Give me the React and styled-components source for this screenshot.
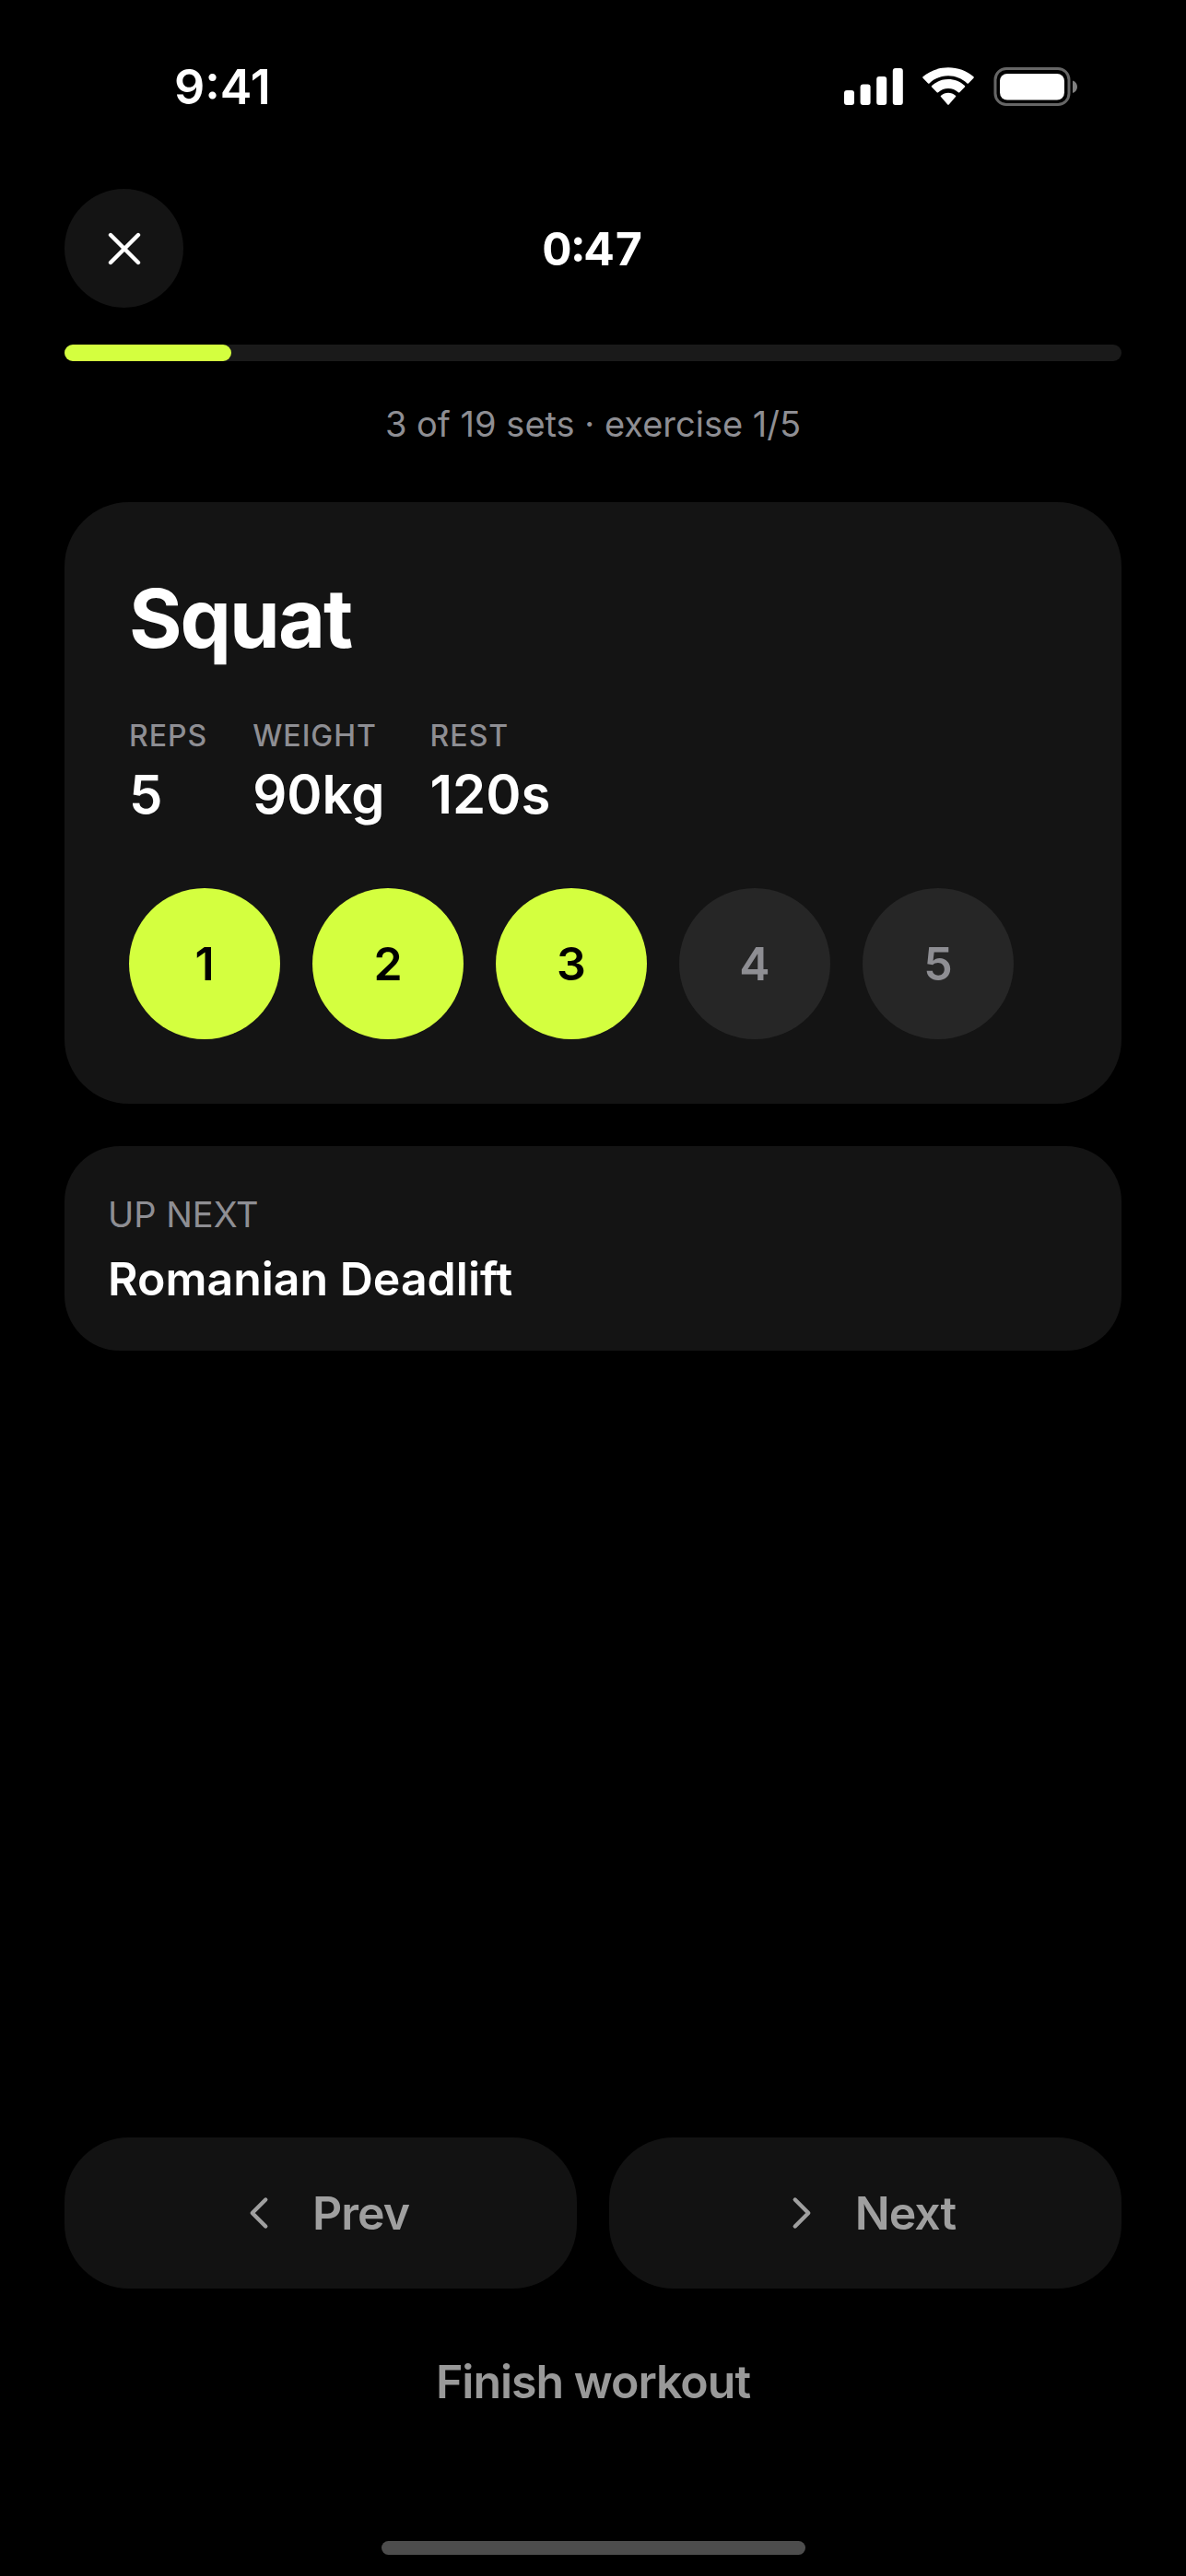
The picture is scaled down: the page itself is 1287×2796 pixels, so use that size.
import React from "react";
import { createGlobalStyle, styled } from "styled-components";

const workout = {
  elapsed: "0:47",
  doneSets: 3,
  totalSets: 19,
  exerciseIndex: 1,
  exerciseCount: 5,
  name: "Squat",
  next: "Romanian Deadlift",
  stats: [
    { label: "REPS", value: "5" },
    { label: "WEIGHT", value: "90kg" },
    { label: "REST", value: "120s" },
  ],
  sets: [1, 2, 3, 4, 5],
};

const SignalIcon = () => (
  <svg width="64" height="42" viewBox="0 0 64 42" fill="#fff" aria-hidden="true">
    <rect x="0" y="25" width="11" height="16" rx="3" />
    <rect x="17.6" y="18.5" width="11" height="22.5" rx="3" />
    <rect x="35.2" y="10" width="11" height="31" rx="3" />
    <rect x="52.8" y="1" width="11" height="40" rx="3" />
  </svg>
);

const WifiIcon = () => (
  <svg width="56" height="42" viewBox="0 0 56 42" fill="#fff" aria-hidden="true">
    <path d="M28 9.2c7.7 0 14.9 3 20.5 8.2.4.4 1 .4 1.4 0l5.6-5.7c.4-.4.4-1 0-1.4C48 3.9 38.4.3 28 .3S8 3.9.5 10.3c-.4.4-.4 1 0 1.4l5.6 5.7c.4.4 1 .4 1.4 0C13.1 12.2 20.3 9.2 28 9.2z" />
    <path d="M28 23.1c4.1 0 7.9 1.5 10.9 4.2.4.4 1 .4 1.4 0l5.6-5.7c.4-.4.4-1.1 0-1.5-4.8-4.5-11.1-7-17.9-7s-13.1 2.5-17.9 7c-.4.4-.4 1.1 0 1.5l5.6 5.7c.4.4 1 .4 1.4 0 3-2.7 6.800-4.2 10.900-4.2z" />
    <path d="M36 32.1c.4-.4.4-1-.1-1.4-2.2-1.9-5-2.9-7.9-2.9s-5.7 1-7.9 2.9c-.5.4-.5 1-.1 1.4l7.3 8.4c.4.4 1 .4 1.4 0z" />
  </svg>
);

const BatteryIcon = () => (
  <svg width="92" height="42" viewBox="0 0 92 42" fill="none" aria-hidden="true">
    <rect x="2" y="1.5" width="80" height="39" rx="12" stroke="#666" strokeWidth="3" />
    <rect x="7" y="7" width="70" height="28.5" rx="8" fill="#fff" />
    <path d="M86 14.5c3 .8 5 3.6 5 6.7s-2 5.9-5 6.7z" fill="#808080" />
  </svg>
);

const CloseIcon = () => (
  <svg width="36" height="36" viewBox="0 0 36 36" aria-hidden="true">
    <path d="M3 3l30 30M33 3L3 33" stroke="#fff" strokeWidth="4.4" strokeLinecap="round" />
  </svg>
);

const Chevron = ({ d }) => (
  <svg width="58" height="58" viewBox="0 0 24 24" fill="none" aria-hidden="true">
    <path d={d} stroke="currentColor" strokeWidth="1.8" strokeLinecap="round" strokeLinejoin="round" />
  </svg>
);

const App = () => {
  const progress = (workout.doneSets / workout.totalSets) * 100;

  return (
    <>
      <GlobalStyle />
      <Screen>
        <StatusBar>
          <Clock>9:41</Clock>
          <StatusIcons>
            <SignalIcon />
            <WifiIcon />
            <BatteryIcon />
          </StatusIcons>
        </StatusBar>
        <Content>
          <Header>
            <CloseButton aria-label="Close workout">
              <CloseIcon />
            </CloseButton>
            <Timer>{workout.elapsed}</Timer>
          </Header>
          <Track
            role="progressbar"
            aria-label="Sets done"
            aria-valuenow={workout.doneSets}
            aria-valuemax={workout.totalSets}
          >
            <Fill style={{ width: `${progress}%` }} />
          </Track>
          <Summary>
            {`${workout.doneSets} of ${workout.totalSets} sets · exercise ${workout.exerciseIndex}/${workout.exerciseCount}`}
          </Summary>
          <ExerciseCard>
            <ExerciseName>{workout.name}</ExerciseName>
            <Stats>
              {workout.stats.map((stat) => (
                <Stat key={stat.label}>
                  <StatLabel>{stat.label}</StatLabel>
                  <StatValue>{stat.value}</StatValue>
                </Stat>
              ))}
            </Stats>
            <Sets>
              {workout.sets.map((set) => (
                <SetButton key={set} $done={set <= workout.doneSets}>
                  {set}
                </SetButton>
              ))}
            </Sets>
          </ExerciseCard>
          <NextCard>
            <NextLabel>UP NEXT</NextLabel>
            <NextName>{workout.next}</NextName>
          </NextCard>
          <Footer>
            <NavRow>
              <NavButton>
                <Chevron d="M15 18l-6-6 6-6" />
                Prev
              </NavButton>
              <NavButton>
                <Chevron d="M9 18l6-6-6-6" />
                Next
              </NavButton>
            </NavRow>
            <FinishButton>Finish workout</FinishButton>
          </Footer>
        </Content>
        <HomeIndicator />
      </Screen>
    </>
  );
};

export default App;

const GlobalStyle = createGlobalStyle`
  * {
    box-sizing: border-box;
  }
  body {
    margin: 0;
    background-color: #000;
    color: #fff;
    font-family: Inter, "Liberation Sans", sans-serif;
  }
  button {
    border: none;
    padding: 0;
    font-family: inherit;
    cursor: pointer;
  }
  svg {
    display: block;
    flex-shrink: 0;
  }
`;

const Screen = styled.div`
  display: flex;
  flex-direction: column;
  min-height: 100vh;
`;
const StatusBar = styled.div`
  display: flex;
  align-items: center;
  justify-content: space-between;
  height: 188px;
  padding: 0 117px 0 189px;
`;
const Clock = styled.div`
  padding-top: 2px;
  font-size: 52px;
  font-weight: 600;
  line-height: 62px;
`;
const StatusIcons = styled.div`
  display: flex;
  align-items: center;
  gap: 21px;
`;
const Content = styled.main`
  display: flex;
  flex-direction: column;
  flex: 1;
  padding: 17px 70px 0;
`;
const Header = styled.header`
  display: grid;
  grid-template-columns: 1fr auto 1fr;
  align-items: center;
`;
const CloseButton = styled.button`
  display: flex;
  align-items: center;
  justify-content: center;
  width: 129px;
  height: 129px;
  border-radius: 50%;
  background-color: #141414;
`;
const Timer = styled.div`
  font-size: 50px;
  font-weight: 700;
  line-height: 60px;
  font-variant-numeric: tabular-nums;
`;
const Track = styled.div`
  height: 18px;
  margin-top: 40px;
  border-radius: 9px;
  background-color: #1a1a1a;
`;
const Fill = styled.div`
  height: 100%;
  border-radius: 9px;
  background-color: #d4ff3f;
`;
const Summary = styled.p`
  margin: 45px 0 62px;
  color: #8e8e93;
  font-size: 38px;
  line-height: 46px;
  text-align: center;
`;
const ExerciseCard = styled.section`
  padding: 70px;
  border-radius: 70px;
  background-color: #141414;
`;
const ExerciseName = styled.h1`
  margin: 0;
  font-size: 88px;
  font-weight: 700;
  line-height: 112px;
  letter-spacing: -2px;
`;
const Stats = styled.dl`
  display: flex;
  gap: 49px;
  margin: 52px 0 67px;
`;
const Stat = styled.div`
  display: flex;
  flex-direction: column;
  gap: 8px;
`;
const StatLabel = styled.dt`
  color: #8e8e93;
  font-size: 32px;
  font-weight: 500;
  line-height: 40px;
  letter-spacing: 1px;
`;
const StatValue = styled.dd`
  margin: 0;
  font-size: 58px;
  font-weight: 600;
  line-height: 70px;
`;
const Sets = styled.div`
  display: flex;
  flex-wrap: wrap;
  gap: 35px;
`;
const SetButton = styled.button`
  width: 164px;
  height: 164px;
  border-radius: 50%;
  background-color: ${(props) => (props.$done ? "#d4ff3f" : "#262626")};
  color: ${(props) => (props.$done ? "#000" : "#8e8e93")};
  font-size: 50px;
  font-weight: 600;
`;
const NextCard = styled.section`
  display: flex;
  flex-direction: column;
  gap: 12px;
  margin-top: 46px;
  padding: 47px;
  border-radius: 60px;
  background-color: #141414;
`;
const NextLabel = styled.div`
  color: #8e8e93;
  font-size: 38px;
  line-height: 54px;
`;
const NextName = styled.div`
  font-size: 50px;
  font-weight: 600;
  line-height: 62px;
`;
const Footer = styled.footer`
  display: flex;
  flex-direction: column;
  gap: 36px;
  margin-top: auto;
`;
const NavRow = styled.div`
  display: grid;
  grid-template-columns: 1fr 1fr;
  gap: 35px;
`;
const NavButton = styled.button`
  display: flex;
  align-items: center;
  justify-content: center;
  gap: 29px;
  height: 164px;
  border-radius: 70px;
  background-color: #121212;
  color: #9f9f9f;
  font-size: 50px;
  font-weight: 600;
  letter-spacing: -1px;
`;
const FinishButton = styled.button`
  height: 129px;
  background: none;
  color: #999;
  font-size: 50px;
  font-weight: 600;
  letter-spacing: -1px;
`;
const HomeIndicator = styled.div`
  width: 460px;
  height: 15px;
  margin: 109px auto 23px;
  border-radius: 8px;
  background-color: #4d4d4d;
`;
